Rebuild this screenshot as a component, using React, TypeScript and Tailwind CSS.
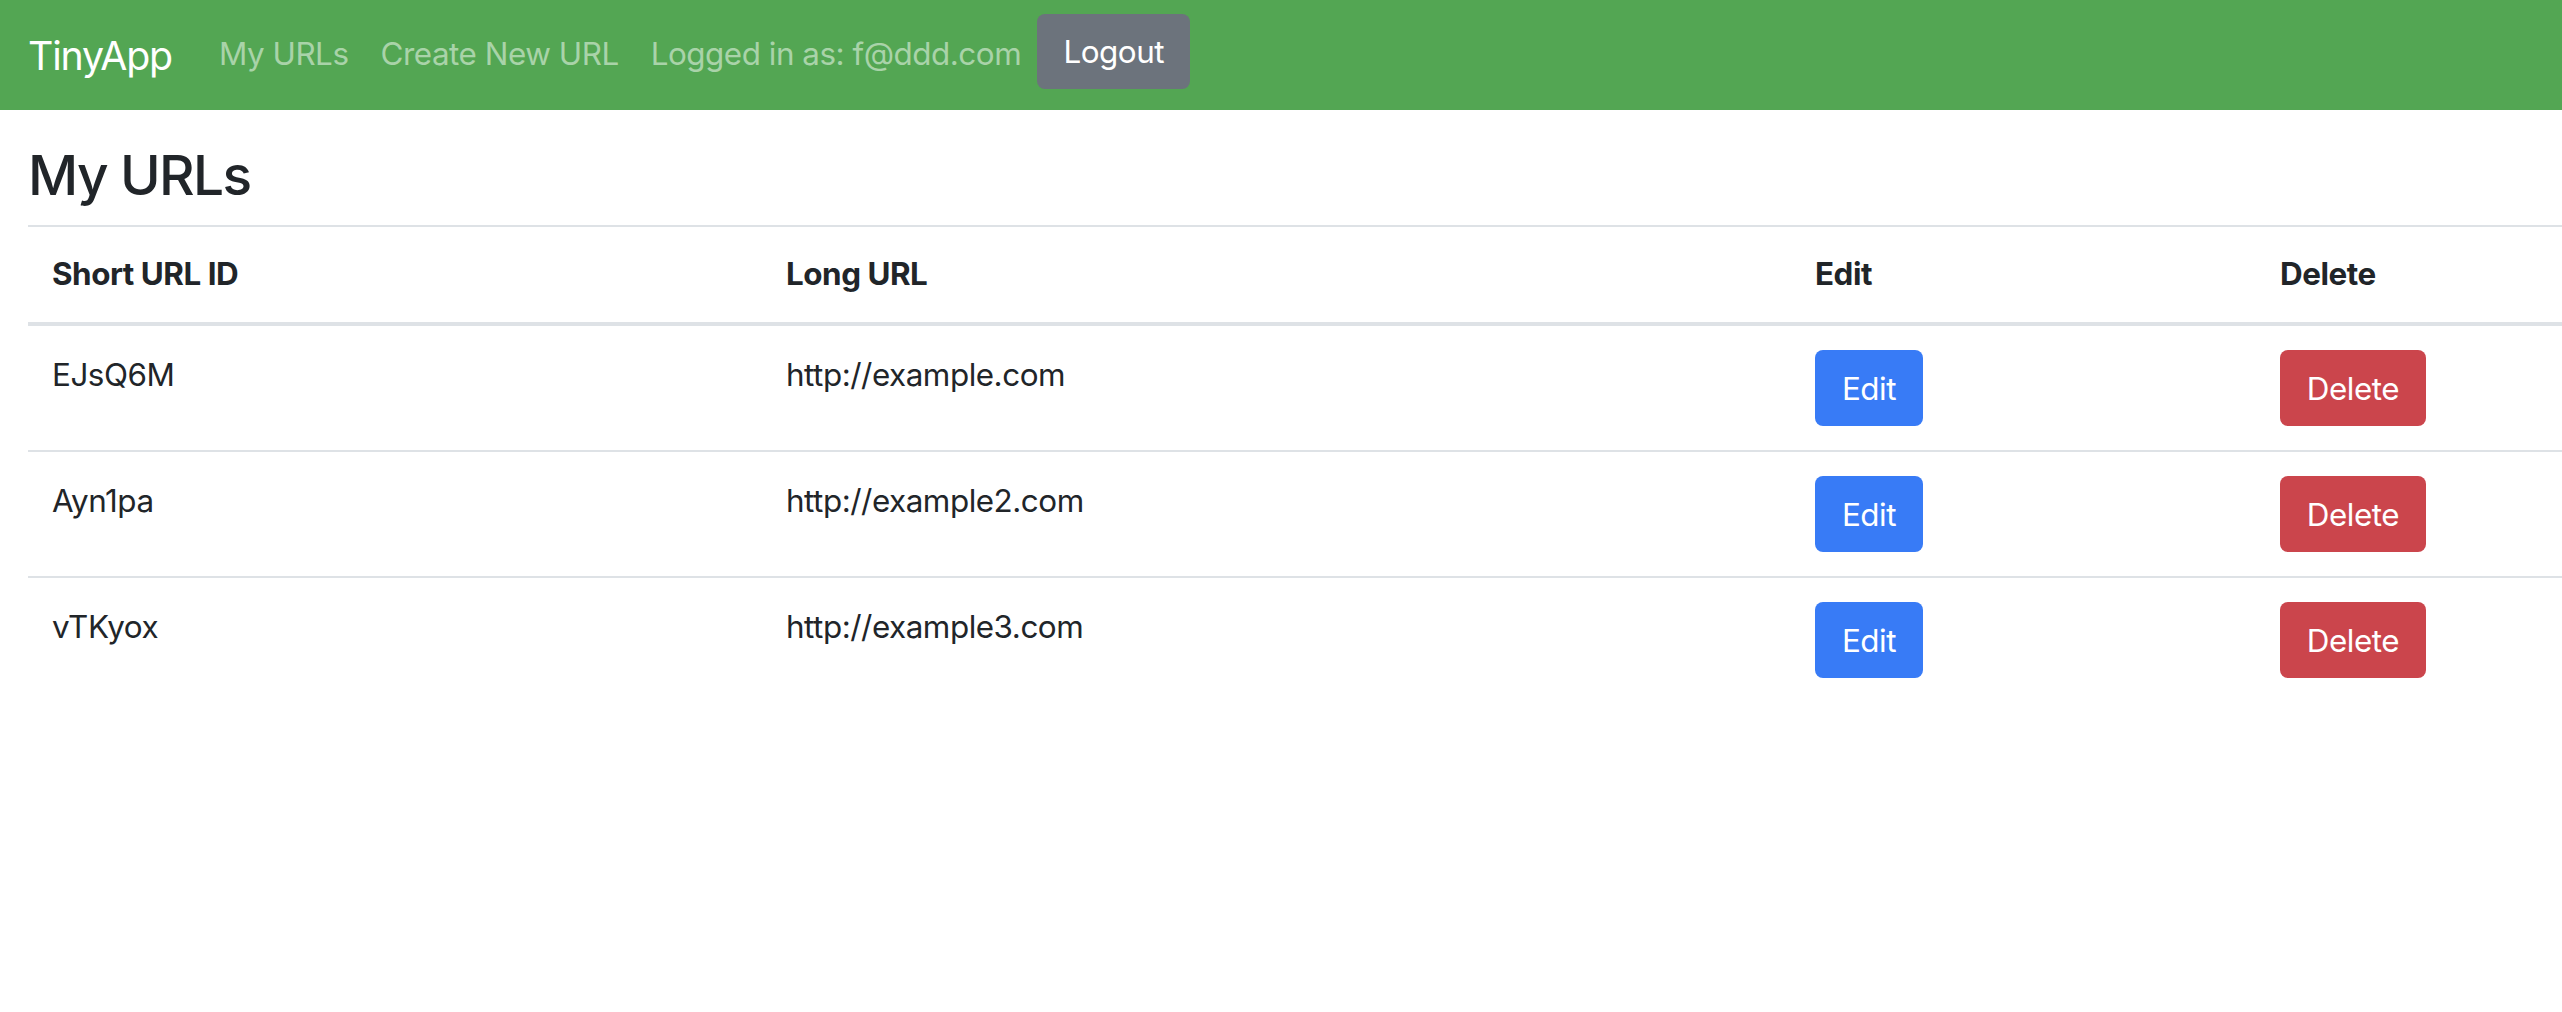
import React from "react";

const urls = [
  { id: "EJsQ6M", longURL: "http://example.com" },
  { id: "Ayn1pa", longURL: "http://example2.com" },
  { id: "vTKyox", longURL: "http://example3.com" },
];

function Navbar() {
  return (
    <nav className="flex h-[110px] items-start bg-[#53a653] pl-[28px]">
      <a href="#" className="mr-[31px] mt-[26px] text-[39.3px] leading-[59px] tracking-[-0.03em] text-white">
        TinyApp
      </a>
      <a href="#" className="mt-[31px] px-[16px] text-[31.4px] leading-[47px] tracking-[-0.015em] text-[#a9d3a9]">
        My URLs
      </a>
      <a href="#" className="mt-[31px] px-[16px] text-[31.4px] leading-[47px] tracking-[-0.015em] text-[#a9d3a9]">
        Create New URL
      </a>
      <span className="mt-[31px] px-[16px] text-[31.4px] leading-[47px] tracking-[-0.015em] text-[#a9d3a9]">
        Logged in as: f@ddd.com
      </span>
      <button className="mt-[14px] h-[75px] w-[153px] rounded-[8px] bg-[#6c737c] pt-[2px] text-[31.4px] leading-[47px] tracking-[-0.015em] text-white">
        Logout
      </button>
    </nav>
  );
}

export default function App() {
  return (
    <div className="min-h-screen bg-white font-['Inter','Liberation_Sans',sans-serif] text-[#212529]">
      <Navbar />
      <main className="pl-[28px] pt-[32px]">
        <h3 className="mb-[17px] text-[55px] font-medium leading-[66px] tracking-[-0.03em]">My URLs</h3>
        <table className="w-full border-collapse text-left text-[31.4px] leading-[47px] tracking-[-0.015em]">
          <thead>
            <tr className="border-t-2 border-b-4 border-[#dee2e6]">
              <th className="w-[734px] px-[24px] py-[24px] align-bottom font-bold">Short URL ID</th>
              <th className="w-[1029px] px-[24px] py-[24px] align-bottom font-bold">Long URL</th>
              <th className="w-[465px] px-[24px] py-[24px] align-bottom font-bold">Edit</th>
              <th className="px-[24px] py-[24px] align-bottom font-bold">Delete</th>
            </tr>
          </thead>
          <tbody>
            {urls.map((url, i) => (
              <tr key={url.id} className={i === 0 ? "" : "border-t-2 border-[#dee2e6]"}>
                <td className="px-[24px] pb-[24px] pt-[26px] align-top">{url.id}</td>
                <td className="px-[24px] pb-[24px] pt-[26px] align-top">{url.longURL}</td>
                <td className="px-[24px] py-[24px] align-top">
                  <button className="h-[76px] w-[108px] rounded-[8px] bg-[#387bf6] pt-[2px] text-[31.4px] leading-[47px] text-white">
                    Edit
                  </button>
                </td>
                <td className="px-[24px] py-[24px] align-top">
                  <button className="h-[76px] w-[146px] rounded-[8px] bg-[#cb454c] pt-[2px] text-[31.4px] leading-[47px] text-white">
                    Delete
                  </button>
                </td>
              </tr>
            ))}
          </tbody>
        </table>
      </main>
    </div>
  );
}
